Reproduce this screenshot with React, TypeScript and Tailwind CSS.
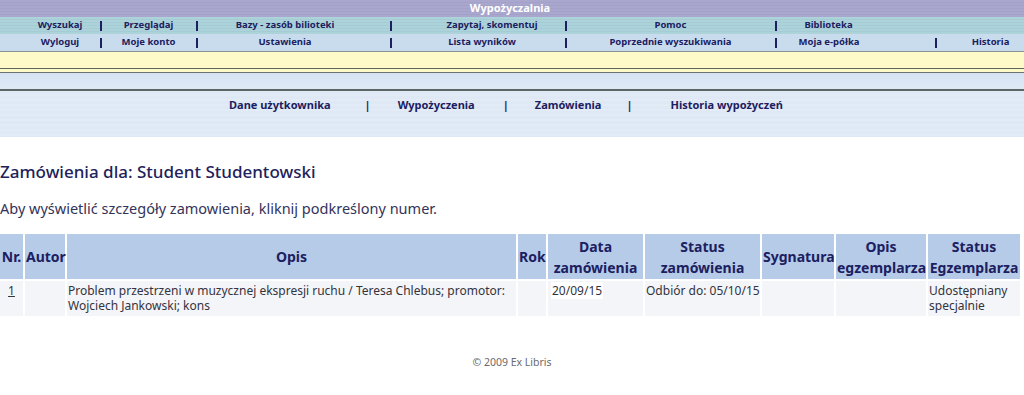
import React from "react";

const navText = "text-[9.5px] font-bold text-[#1c2060]";

function Sep() {
  return (
    <span className="flex w-[3px] shrink-0 justify-center">
      <span className="h-[10px] w-[2px] bg-[#1c2060]" />
    </span>
  );
}

function TopNav() {
  return (
    <div className="font-['Noto_Sans',sans-serif]">
      <div className="flex h-[17px] items-center justify-center bg-[repeating-linear-gradient(180deg,#aaa7ce_0px,#aaa7ce_2px,#a4a1c9_2px,#a4a1c9_3px)] text-[11px] font-bold text-white">
        <span className="pr-[4px]">Wypożyczalnia</span>
      </div>

      <div className={`flex h-[17px] items-center bg-[repeating-linear-gradient(180deg,#acd2da_0px,#acd2da_2px,#a5ccd5_2px,#a5ccd5_3px)] ${navText}`}>
        <div className="flex w-[99px] justify-center pl-[21px]">Wyszukaj</div>
        <Sep />
        <div className="flex w-[93px] justify-center">Przeglądaj</div>
        <Sep />
        <div className="flex w-[191px] justify-center pr-[17px]">Bazy - zasób bilioteki</div>
        <Sep />
        <div className="flex w-[172px] justify-center pl-[28px]">Zapytaj, skomentuj</div>
        <Sep />
        <div className="flex w-[207px] justify-center">Pomoc</div>
        <Sep />
        <div className="flex flex-1 justify-center pr-[144px]">Biblioteka</div>
      </div>

      <div className={`flex h-[17px] items-center bg-[#c9dcee] ${navText}`}>
        <div className="flex w-[99px] justify-center pl-[21px]">Wyloguj</div>
        <Sep />
        <div className="flex w-[93px] justify-center">Moje konto</div>
        <Sep />
        <div className="flex w-[191px] justify-center pr-[17px]">Ustawienia</div>
        <Sep />
        <div className="flex w-[172px] justify-center pl-[8px]">Lista wyników</div>
        <Sep />
        <div className="flex w-[207px] justify-center">Poprzednie wyszukiwania</div>
        <Sep />
        <div className="flex w-[157px] justify-center pr-[53px]">Moja e-półka</div>
        <Sep />
        <div className="flex flex-1 justify-center pl-[20px]">Historia</div>
      </div>

      <div className="h-px bg-[#8a9496]" />
      <div className="h-[16px] bg-[#fffbc9]" />
      <div className="h-px bg-[#5f675c]" />
      <div className="h-[3px] bg-[#fffbc9]" />
      <div className="h-px bg-[#6b7270]" />
      <div className="h-[16px] bg-[linear-gradient(180deg,#d6e3f4,#dfe9f6)]" />
      <div className="h-[2px] bg-[#5d6667]" />

      <div className="flex h-[46px] items-start bg-[repeating-linear-gradient(180deg,#dfe9f5_0px,#dfe9f5_3px,#e2ebf6_3px,#e2ebf6_5px)] pt-[6px] text-[11px] font-bold text-[#1c2060]">
        <span className="ml-[229px]">Dane użytkownika</span>
        <span className="ml-[34px]">|</span>
        <span className="ml-[27px]">Wypożyczenia</span>
        <span className="ml-[28px]">|</span>
        <span className="ml-[26px]">Zamówienia</span>
        <span className="ml-[25px]">|</span>
        <span className="ml-[38px]">Historia wypożyczeń</span>
      </div>
    </div>
  );
}

const th = "bg-[#b5cbe8] px-[1px] align-middle text-center text-[14px] font-bold leading-[21px] text-[#1c2060]";
const td = "bg-[#f4f5f8] px-[1px] pt-[2px] pb-[3px] align-top text-[12px] leading-[15px] text-[#33333d]";

function Orders() {
  return (
    <table className="-ml-[2px] w-[1024px] table-fixed border-separate border-spacing-x-[2px] border-spacing-y-[2px]">
      <colgroup>
        <col className="w-[23px]" />
        <col className="w-[40px]" />
        <col className="w-[449px]" />
        <col className="w-[28px]" />
        <col className="w-[95px]" />
        <col className="w-[115px]" />
        <col className="w-[72px]" />
        <col className="w-[90px]" />
        <col className="w-[92px]" />
      </colgroup>
      <thead>
        <tr className="h-[45px]">
          <th className={th}>Nr.</th>
          <th className={th}>Autor</th>
          <th className={th}>Opis</th>
          <th className={th}>Rok</th>
          <th className={th}>Data zamówienia</th>
          <th className={th}>Status zamówienia</th>
          <th className={th}>Sygnatura</th>
          <th className={th}>Opis egzemplarza</th>
          <th className={th}>Status Egzemplarza</th>
        </tr>
      </thead>
      <tbody>
        <tr>
          <td className={`${td} text-center`}>
            <a href="#" className="underline text-[#33333d]">1</a>
          </td>
          <td className={td}></td>
          <td className={td}>
            Problem przestrzeni w muzycznej ekspresji ruchu / Teresa Chlebus; promotor: Wojciech Jankowski; kons
          </td>
          <td className={td}></td>
          <td className={td}>
            <span className="ml-[2px] bg-white px-[1px]">20/09/15</span>
          </td>
          <td className={`${td} whitespace-nowrap`}>Odbiór do: 05/10/15</td>
          <td className={td}></td>
          <td className={td}></td>
          <td className={td}>Udostępniany specjalnie</td>
        </tr>
      </tbody>
    </table>
  );
}

export default function App() {
  return (
    <div className="h-[395px] w-[1024px] overflow-hidden bg-white font-['Noto_Sans',sans-serif]">
      <TopNav />

      <h2 className="mt-[24px] text-[17px] font-medium leading-[22px] text-[#22225a]">
        Zamówienia dla: Student Studentowski
      </h2>
      <p className="mt-[15px] text-[14.5px] leading-[20px] text-[#33335a]">
        Aby wyświetlić szczegóły zamowienia, kliknij podkreślony numer.
      </p>

      <div className="mt-[14px]">
        <Orders />
      </div>

      <p className="mt-[37px] text-center text-[10.5px] text-[#6a6a6a]">© 2009 Ex Libris</p>
    </div>
  );
}
